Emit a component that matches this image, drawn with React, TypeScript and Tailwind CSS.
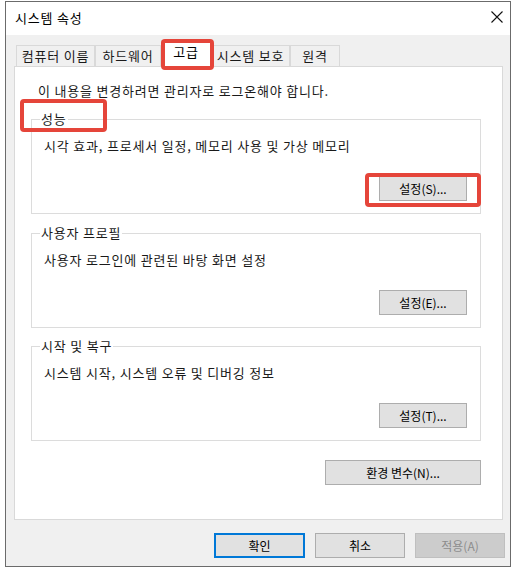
import React from 'react';

const font = "font-['Noto_Sans_CJK_KR',sans-serif]";
const body = 'text-[13px] leading-[16px] tracking-[0.8px] text-[#1a1a1a]';

const tabs = [
    { label: '컴퓨터 이름', w: 'w-[79px]', active: false },
    { label: '하드웨어', w: 'w-[66px]', active: false },
    { label: '고급', w: 'w-[50px]', active: true },
    { label: '시스템 보호', w: 'w-[79px]', active: false },
    { label: '원격', w: 'w-[50px]', active: false },
];

const Btn: React.FC<{ label: string; className?: string }> = ({ label, className = '' }) => (
    <button className={`h-[25px] border border-[#adadad] bg-[#e1e1e1] text-[12px] leading-none text-black ${className}`}>
        {label}
    </button>
);

const Group: React.FC<{ title: string; desc: string; btn: string; className?: string }> = ({ title, desc, btn, className = '' }) => (
    <fieldset className={`w-[450px] border border-[#dcdcdc] pl-[12px] pr-[13px] pt-[11px] pb-[12px] ${className}`}>
        <legend className={`-ml-[4px] px-[1px] ${body}`}>{title}</legend>
        <div className={body}>{desc}</div>
        <div className="mt-[22px] flex justify-end">
            <Btn label={btn} className="w-[88px]" />
        </div>
    </fieldset>
);

export default function App() {
    return (
        <div className={`relative w-[514px] h-[569px] bg-white overflow-hidden ${font}`}>
            <div className="ml-[5px] mt-[1px] w-[506px] h-[566px] border border-[#6b6b6b] flex flex-col">
                {/* title bar */}
                <div className="h-[33px] bg-white flex items-center justify-between pl-[9px] pr-[7px]">
                    <span className={`-mt-[2px] ${body} text-black`}>시스템 속성</span>
                    <svg width="12" height="12" viewBox="0 0 12 12" className="-mt-[4px]">
                        <path d="M0.5 0.5 L11.5 11.5 M11.5 0.5 L0.5 11.5" stroke="#111" strokeWidth="1.1" fill="none" />
                    </svg>
                </div>

                {/* body */}
                <div className="flex-1 bg-[#f0f0f0] pl-[8px] pr-[5px] pt-[5px] flex flex-col">
                    <div className="h-[26px] flex items-end pl-[2px]">
                        {tabs.map((t) =>
                            t.active ? (
                                <div
                                    key={t.label}
                                    className={`${t.w} relative z-10 h-[27px] -mb-[1px] bg-white border border-b-0 border-[#d9d9d9] flex justify-center pt-[3px] ${body} text-black`}
                                >
                                    {t.label}
                                </div>
                            ) : (
                                <div
                                    key={t.label}
                                    className={`${t.w} h-[21px] bg-[#f0f0f0] border border-b-0 border-[#d9d9d9] flex items-center justify-center ${body}`}
                                >
                                    {t.label}
                                </div>
                            )
                        )}
                    </div>

                    <div className="w-[489px] h-[454px] border border-[#d9d9d9] bg-white">
                        <p className={`pt-[16px] pl-[23px] ${body}`}>
                            이 내용을 변경하려면 관리자로 로그온해야 합니다.
                        </p>
                        <div className="ml-[16px] w-[450px] flex flex-col">
                            <Group className="mt-[12px]" title="성능" desc="시각 효과, 프로세서 일정, 메모리 사용 및 가상 메모리" btn="설정(S)..." />
                            <Group className="mt-[11px]" title="사용자 프로필" desc="사용자 로그인에 관련된 바탕 화면 설정" btn="설정(E)..." />
                            <Group className="mt-[10px]" title="시작 및 복구" desc="시스템 시작, 시스템 오류 및 디버깅 정보" btn="설정(T)..." />
                            <div className="mt-[19px] flex justify-end">
                                <Btn label="환경 변수(N)..." className="w-[156px]" />
                            </div>
                        </div>
                    </div>

                    <div className="mt-[13px] flex justify-end gap-[10px]">
                        <button className="w-[91px] h-[25px] border-2 border-[#0078d7] bg-[#e1e1e1] text-[12px] leading-none text-black">확인</button>
                        <Btn label="취소" className="w-[90px]" />
                        <button className="w-[90px] h-[25px] border border-[#bfbfbf] bg-[#cccccc] text-[12px] leading-none text-[#8c8c8c]">적용(A)</button>
                    </div>
                </div>
            </div>

            {/* annotation boxes */}
            <div className="absolute left-[161px] top-[39px] w-[53px] h-[31px] border-[4px] border-[#e5453a] rounded-[4px] z-20" />
            <div className="absolute left-[20px] top-[99px] w-[87px] h-[33px] border-[4px] border-[#e5453a] rounded-[4px] z-20" />
            <div className="absolute left-[365px] top-[173px] w-[116px] h-[34px] border-[4px] border-[#e5453a] rounded-[4px] z-20" />
        </div>
    );
}
